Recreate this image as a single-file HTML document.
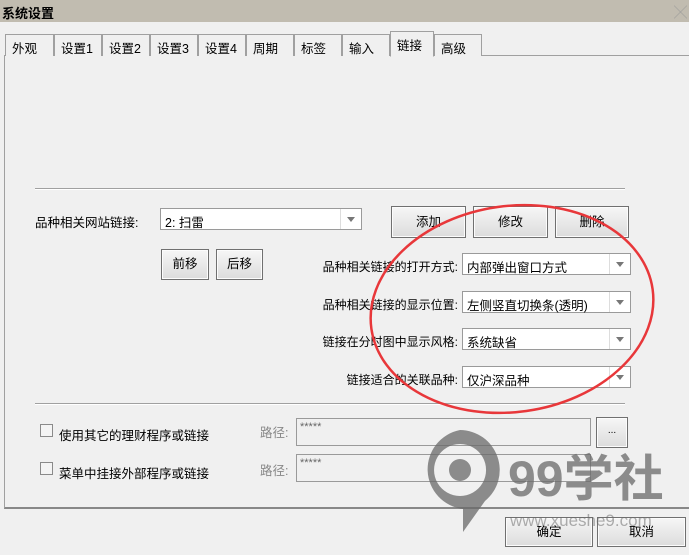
<!DOCTYPE html><html><head><meta charset="utf-8"><style>
*{box-sizing:border-box}body{margin:0;width:689px;height:555px;background:#f0f0f0;font-family:"Liberation Sans","Noto Sans CJK SC",sans-serif;font-size:12px;color:#000;position:relative;overflow:hidden}
.a{position:absolute}
.title{left:0;top:0;width:689px;height:22px;background:#c1bcb0;font-weight:bold;font-size:13px;padding:3px 2px}
.tab{top:34px;height:22px;border:1px solid #a0a0a0;border-bottom:none;background:#f0f0f0;padding:3px 0 0 6px;font-size:12.5px}
.panel{left:4px;top:55px;width:686px;height:454px;border:1px solid #a0a0a0;border-right:none;background:#f0f0f0;border-bottom:2px solid #888}
.hr{height:2px;border-top:1px solid #a0a0a0;border-bottom:1px solid #fff}
.combo{height:22px;border:1px solid #9a9a9a;background:#fff;padding:3px 4px;font-size:12.5px}
.combo:after{content:"";position:absolute;right:0;top:0;width:20px;height:20px;border-left:1px solid #ddd;background:#fff}
.arr{position:absolute;right:6px;top:8px;border:4px solid transparent;border-top:5px solid #777;z-index:2}
.btn{border:1px solid #707070;background:linear-gradient(#f6f6f6,#dcdcdc);text-align:center;font-size:12.5px;box-shadow:inset 0 0 0 1px #fcfcfc}
.lbl{text-align:right;width:300px;font-size:12px}
.cb{width:13px;height:13px;border:1px solid #8a8a8a;background:#f4f4f4}
.inp{border:1px solid #9a9a9a;background:#f0f0f0;color:#666;padding:2px 3px;font-size:11px}
</style></head><body>
<div class="a title">系统设置<span style="position:absolute;right:2px;top:2px;color:#999;font-weight:normal">╳</span></div>
<div class="a panel"></div>
<div class="a tab" style="left:5px;width:49px">外观</div>
<div class="a tab" style="left:54px;width:48px">设置1</div>
<div class="a tab" style="left:102px;width:48px">设置2</div>
<div class="a tab" style="left:150px;width:48px">设置3</div>
<div class="a tab" style="left:198px;width:48px">设置4</div>
<div class="a tab" style="left:246px;width:48px">周期</div>
<div class="a tab" style="left:294px;width:48px">标签</div>
<div class="a tab" style="left:342px;width:48px">输入</div>
<div class="a tab" style="left:390px;top:31px;height:26px;width:44px;border-bottom:1px solid #f0f0f0">链接</div>
<div class="a tab" style="left:434px;width:48px">高级</div>
<div class="a hr" style="left:35px;top:188px;width:590px"></div>
<div class="a" style="left:35px;top:212px;font-size:12.5px">品种相关网站链接:</div>
<div class="a combo" style="left:160px;top:208px;width:202px">2: 扫雷<i class="arr"></i></div>
<div class="a btn" style="left:391px;top:206px;width:75px;height:32px;line-height:30px">添加</div>
<div class="a btn" style="left:473px;top:206px;width:75px;height:32px;line-height:30px">修改</div>
<div class="a btn" style="left:555px;top:206px;width:74px;height:32px;line-height:30px">删除</div>
<div class="a btn" style="left:161px;top:249px;width:48px;height:31px;line-height:29px">前移</div>
<div class="a btn" style="left:216px;top:249px;width:47px;height:31px;line-height:29px">后移</div>
<div class="a lbl" style="left:158px;top:258px">品种相关链接的打开方式:</div>
<div class="a combo" style="left:462px;top:253px;width:169px">内部弹出窗口方式<i class="arr"></i></div>
<div class="a lbl" style="left:158px;top:296px">品种相关链接的显示位置:</div>
<div class="a combo" style="left:462px;top:291px;width:169px">左侧竖直切换条(透明)<i class="arr"></i></div>
<div class="a lbl" style="left:158px;top:333px">链接在分时图中显示风格:</div>
<div class="a combo" style="left:462px;top:328px;width:169px">系统缺省<i class="arr"></i></div>
<div class="a lbl" style="left:158px;top:371px">链接适合的关联品种:</div>
<div class="a combo" style="left:462px;top:366px;width:169px">仅沪深品种<i class="arr"></i></div>
<div class="a hr" style="left:35px;top:403px;width:590px"></div>
<div class="a cb" style="left:40px;top:424px"></div>
<div class="a" style="left:59px;top:425px;font-size:12.5px">使用其它的理财程序或链接</div>
<div class="a cb" style="left:40px;top:462px"></div>
<div class="a" style="left:59px;top:463px;font-size:12.5px">菜单中挂接外部程序或链接</div>
<div class="a" style="left:260px;top:422px;color:#888;font-size:12.5px">路径:</div>
<div class="a" style="left:260px;top:460px;color:#888;font-size:12.5px">路径:</div>
<div class="a inp" style="left:296px;top:418px;width:295px;height:28px">*****</div>
<div class="a inp" style="left:296px;top:454px;width:295px;height:28px">*****</div>
<div class="a btn" style="left:596px;top:417px;width:32px;height:31px;line-height:26px;font-size:10px">...</div>
<div class="a btn" style="left:505px;top:517px;width:88px;height:30px;line-height:28px">确定</div>
<div class="a btn" style="left:597px;top:517px;width:89px;height:30px;line-height:28px">取消</div>
<svg class="a" style="left:0;top:0" width="689" height="555">
<ellipse cx="512" cy="309" rx="142" ry="103" transform="rotate(-8 512 309)" fill="none" stroke="#e8373a" stroke-width="2.5"/>
<g fill="#6a6a6a" opacity="0.75">
<path d="M460 430a40 40 0 0 1 25 71l-22 31v-23a40 40 0 0 1 -3 -79zm0 14a26 26 0 1 0 0.1 0z" fill-rule="evenodd"/>
<circle cx="460" cy="470" r="11"/>
<text x="508" y="496" font-family="Liberation Sans,Noto Sans CJK SC,sans-serif" font-size="50" font-weight="bold">99学社</text>
<text x="510" y="526" font-family="Liberation Sans,sans-serif" font-size="17" opacity="0.7">www.xueshe9.com</text>
</g></svg>
</body></html>
